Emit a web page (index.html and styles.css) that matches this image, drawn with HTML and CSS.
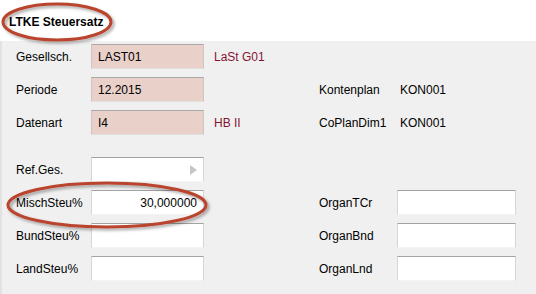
FILE: index.html
```html
<!DOCTYPE html>
<html lang="de">
  <head>
    <meta charset="UTF-8" />
    <meta name="viewport" content="width=device-width, initial-scale=1.0" />
    <title>LTKE Steuersatz</title>
    <link rel="stylesheet" href="styles.css">
  </head>
  <body>
    <div class="header">
      <h1>LTKE Steuersatz</h1>
    </div>
    <div class="form">
      <div class="row">
        <span class="label">Gesellsch.</span>
        <div class="field locked">LAST01</div>
        <span class="hint">LaSt G01</span>
      </div>
      <div class="row">
        <span class="label">Periode</span>
        <div class="field locked">12.2015</div>
        <span class="hint"></span>
        <span class="label">Kontenplan</span>
        <span class="value">KON001</span>
      </div>
      <div class="row">
        <span class="label">Datenart</span>
        <div class="field locked">I4</div>
        <span class="hint">HB II</span>
        <span class="label">CoPlanDim1</span>
        <span class="value">KON001</span>
      </div>
      <div class="row spaced">
        <span class="label">Ref.Ges.</span>
        <div class="field lookup"><span class="arrow"></span></div>
      </div>
      <div class="row">
        <span class="label">MischSteu%</span>
        <div class="field number">30,000000</div>
        <span class="hint"></span>
        <span class="label">OrganTCr</span>
        <div class="field"></div>
      </div>
      <div class="row">
        <span class="label">BundSteu%</span>
        <div class="field"></div>
        <span class="hint"></span>
        <span class="label">OrganBnd</span>
        <div class="field"></div>
      </div>
      <div class="row">
        <span class="label">LandSteu%</span>
        <div class="field"></div>
        <span class="hint"></span>
        <span class="label">OrganLnd</span>
        <div class="field"></div>
      </div>
    </div>

    <!-- annotation rings drawn over the screenshot -->
    <svg class="ring ring-title" width="120" height="46" viewBox="0 0 120 46">
      <defs>
        <filter id="shade" x="-10%" y="-20%" width="130%" height="150%">
          <feDropShadow dx="2" dy="2" stdDeviation="1.5" flood-color="#000" flood-opacity="0.35" />
        </filter>
      </defs>
      <ellipse cx="57" cy="22" rx="54" ry="18" fill="none" stroke="#b9442e" stroke-width="3" filter="url(#shade)" />
    </svg>
    <svg class="ring ring-misch" width="216" height="56" viewBox="0 0 216 56">
      <ellipse cx="103" cy="24" rx="99" ry="22" fill="none" stroke="#b9442e" stroke-width="3" filter="url(#shade)" />
    </svg>
  </body>
</html>
```

FILE: styles.css
```css
body {
  margin: 0;
  font-family: "Liberation Sans", Arial, sans-serif;
  font-size: 12px;
  color: #000;
  background-color: #f0f0f0;
  width: 536px;
  height: 294px;
  overflow: hidden;
  position: relative;
}
.header {
  background-color: #ffffff;
  height: 41px;
  box-sizing: border-box;
  padding: 15px 9px 0;
}
h1 {
  margin: 0;
  font-size: 12px;
  line-height: 14px;
  font-weight: bold;
}
.form {
  border-left: 2px solid #e2e2e2;
  height: 253px;
  box-sizing: border-box;
  padding: 3px 0 0 14px;
  display: flex;
  flex-direction: column;
  gap: 8px;
}
.row {
  display: grid;
  grid-template-columns: 75px 113px 115px 78px 119px;
  height: 25px;
  align-items: center;
}
.row.spaced {
  margin-top: 14px;
}
.label {
  white-space: nowrap;
}
.field {
  height: 25px;
  box-sizing: border-box;
  background-color: #ffffff;
  border: 1px solid;
  border-color: #a3a3a3 #d6d6d6 #f4f4f4 #d6d6d6;
  padding: 0 6px;
  display: flex;
  align-items: center;
}
.field.locked {
  background-color: #e9d1ca;
  border-color: #a8a8a8 #d0c4c0 #e0e0e0 #d0c4c0;
}
.field.number {
  justify-content: flex-end;
}
.field.lookup {
  justify-content: flex-end;
  padding-right: 6px;
}
.arrow {
  width: 0;
  height: 0;
  border-top: 5px solid transparent;
  border-bottom: 5px solid transparent;
  border-left: 7px solid #c6c6c6;
}
.hint {
  padding-left: 10px;
  color: #861433;
}
.value {
  padding-left: 3px;
}
.ring {
  position: absolute;
  pointer-events: none;
}
.ring-title {
  left: 0;
  top: 0;
}
.ring-misch {
  left: 4px;
  top: 181px;
}
```
